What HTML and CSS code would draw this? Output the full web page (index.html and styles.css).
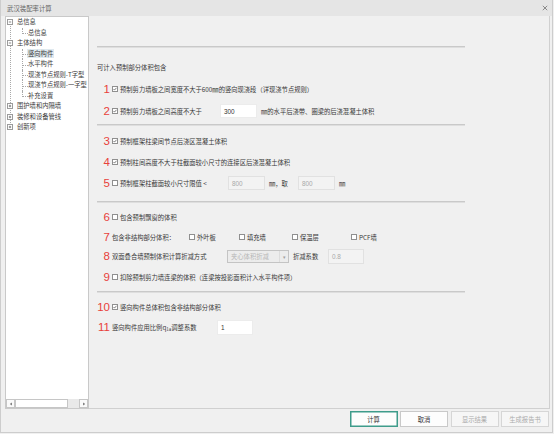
FILE: index.html
```html
<!DOCTYPE html>
<html lang="zh-CN">
<head>
<meta charset="utf-8">
<title>武汉装配率计算</title>
<link rel="stylesheet" href="styles.css">
</head>
<body>
<div class="window">
  <div class="titlebar">
    <span class="title">武汉装配率计算</span>
    <svg class="close" viewBox="0 0 6 6" width="6" height="6"><path d="M0.8 0.8L5.2 5.2M5.2 0.8L0.8 5.2"/></svg>
  </div>
  <div class="content">
    <div class="tree-panel">
      <ul class="tree">
        <li class="root"><span class="tw"><svg viewBox="0 0 4 4"><path d="M0.8 2H3.2"/></svg></span><span>总信息</span></li>
        <li class="child last"><span>总信息</span></li>
        <li class="root"><span class="tw"><svg viewBox="0 0 4 4"><path d="M0.8 2H3.2"/></svg></span><span>主体结构</span></li>
        <li class="child sel"><span class="lbl">竖向构件</span></li>
        <li class="child"><span>水平构件</span></li>
        <li class="child"><span>现浇节点规则-T字型</span></li>
        <li class="child"><span>现浇节点规则-一字型</span></li>
        <li class="child last"><span>补充设置</span></li>
        <li class="root"><span class="tw"><svg viewBox="0 0 4 4"><path d="M0.8 2H3.2M2 0.8V3.2"/></svg></span><span>围护墙和内隔墙</span></li>
        <li class="root"><span class="tw"><svg viewBox="0 0 4 4"><path d="M0.8 2H3.2M2 0.8V3.2"/></svg></span><span>装修和设备管线</span></li>
        <li class="root"><span class="tw"><svg viewBox="0 0 4 4"><path d="M0.8 2H3.2M2 0.8V3.2"/></svg></span><span>创新项</span></li>
      </ul>
      <div class="hscroll">
        <span class="sb-btn"><svg viewBox="0 0 4 4"><path d="M2.8 0.6V3.4L0.9 2Z"/></svg></span>
        <span class="sb-thumb"></span>
        <span class="sb-track"></span>
        <span class="sb-btn"><svg viewBox="0 0 4 4"><path d="M1.2 0.6V3.4L3.1 2Z"/></svg></span>
      </div>
    </div>

    <div class="main">
      <div class="sep"></div>

      <div class="row mt12"><span class="text">可计入预制部分体积包含</span></div>

      <div class="row mt8">
        <span class="num">1</span>
        <span class="cb"><svg viewBox="0 0 4 4"><path d="M0.5 2L1.5 3.1L3.5 0.8"/></svg></span>
        <span class="text">预制剪力墙板之间宽度不大于600㎜的竖向现浇段（详现浇节点规则）</span>
      </div>

      <div class="row mt8">
        <span class="num">2</span>
        <span class="cb"><svg viewBox="0 0 4 4"><path d="M0.5 2L1.5 3.1L3.5 0.8"/></svg></span>
        <span class="text w100">预制剪力墙板之间高度不大于</span>
        <span class="field">300</span>
        <span class="text ml4">㎜的水平后浇带、圈梁的后浇混凝土体积</span>
      </div>

      <div class="sep mt6"></div>

      <div class="row mt8">
        <span class="num">3</span>
        <span class="cb"><svg viewBox="0 0 4 4"><path d="M0.5 2L1.5 3.1L3.5 0.8"/></svg></span>
        <span class="text">预制框架柱梁间节点后浇区混凝土体积</span>
      </div>

      <div class="row mt7">
        <span class="num">4</span>
        <span class="cb"><svg viewBox="0 0 4 4"><path d="M0.5 2L1.5 3.1L3.5 0.8"/></svg></span>
        <span class="text">预制柱间高度不大于柱截面较小尺寸的连接区后浇混凝土体积</span>
      </div>

      <div class="row mt7">
        <span class="num">5</span>
        <span class="cb"></span>
        <span class="text w108">预制框架柱截面较小尺寸限值 &lt;</span>
        <span class="field off">800</span>
        <span class="text ml4 w29">㎜，取</span>
        <span class="field off">800</span>
        <span class="text ml4">㎜</span>
      </div>

      <div class="sep mt11"></div>

      <div class="row mt7">
        <span class="num">6</span>
        <span class="cb"></span>
        <span class="text">包含预制飘窗的体积</span>
      </div>

      <div class="row mt6">
        <span class="num">7</span>
        <span class="text w77">包含非结构部分体积：</span>
        <span class="opt w50"><span class="cb"></span><span class="text">外叶板</span></span>
        <span class="opt w53"><span class="cb"></span><span class="text">填充墙</span></span>
        <span class="opt w59"><span class="cb"></span><span class="text">保温层</span></span>
        <span class="opt"><span class="cb"></span><span class="text">PCF墙</span></span>
      </div>

      <div class="row mt5">
        <span class="num">8</span>
        <span class="text w115">双面叠合墙预制体积计算折减方式</span>
        <span class="select"><span class="sel-text">夹心体积折减</span><span class="sel-arrow">▾</span></span>
        <span class="text ml4 w35">折减系数</span>
        <span class="field off tall">0.8</span>
      </div>

      <div class="row mt7">
        <span class="num">9</span>
        <span class="cb"></span>
        <span class="text">扣除预制剪力墙连梁的体积（连梁按投影面积计入水平构件项）</span>
      </div>

      <div class="sep mt7"></div>

      <div class="row mt7">
        <span class="num">10</span>
        <span class="cb"><svg viewBox="0 0 4 4"><path d="M0.5 2L1.5 3.1L3.5 0.8"/></svg></span>
        <span class="text">竖向构件总体积包含非结构部分体积</span>
      </div>

      <div class="row mt6">
        <span class="num">11</span>
        <span class="text w105">竖向构件应用比例q<sub>1a</sub>调整系数</span>
        <span class="field tall">1</span>
      </div>
    </div>
  </div>

  <div class="footer">
    <span class="btn primary">计算</span>
    <span class="btn">取消</span>
    <span class="btn disabled">显示结果</span>
    <span class="btn disabled">生成报告书</span>
  </div>
</div>
</body>
</html>
```

FILE: styles.css
```css
* {
  box-sizing: border-box;
  margin: 0;
  padding: 0;
}

html, body {
  background: #f0f0f0;
}

body {
  font-family: "Noto Sans CJK SC", "Noto Sans", sans-serif;
  font-size: 6.3px;
  color: #383838;
}

.window {
  width: 553px;
  height: 433px;
  border: 1px solid #cdcdcd;
  border-top: 0;
  display: flex;
  flex-direction: column;
  background: #f0f0f0;
}

/* title bar */
.titlebar {
  height: 16px;
  flex: none;
  background: #e5e5e5;
  display: flex;
  align-items: center;
  justify-content: space-between;
  padding: 0 4px 0 6px;
}

.title {
  color: #666;
  font-size: 6.4px;
}

.close {
  width: 6px;
  height: 6px;
}

.close path {
  stroke: #8a8a8a;
  stroke-width: 1;
  fill: none;
}

/* content area */
.content {
  height: 393px;
  flex: none;
  display: flex;
  padding: 0 2px 0 4px;
}

/* tree */
.tree-panel {
  width: 84px;
  flex: none;
  border: 1px solid #c9c9c9;
  background: #fff;
  display: flex;
  flex-direction: column;
}

.tree {
  flex: 1;
  list-style: none;
  position: relative;
  color: #3c3c3c;
}

.tree::before {
  content: "";
  position: absolute;
  left: 4px;
  top: 5.25px;
  height: 105px;
  border-left: 1px dotted #a9a9a9;
}

.tree li {
  position: relative;
  height: 10.5px;
  line-height: 10.5px;
  display: flex;
  align-items: center;
  white-space: nowrap;
}

.root {
  padding-left: 1px;
}

.tw {
  position: relative;
  z-index: 1;
  width: 6px;
  height: 6px;
  border: 1px solid #9c9c9c;
  background: #fff;
  margin-right: 4px;
  display: flex;
}

.tw svg {
  width: 4px;
  height: 4px;
}

.tw path {
  stroke: #555;
  stroke-width: 0.7;
  fill: none;
}

.child {
  padding-left: 22px;
}

.child::before {
  content: "";
  position: absolute;
  left: 16px;
  top: 0;
  height: 5.5px;
  width: 5px;
  border-left: 1px dotted #a9a9a9;
  border-bottom: 1px dotted #a9a9a9;
}

.child:not(.last)::after {
  content: "";
  position: absolute;
  left: 16px;
  top: 5.5px;
  bottom: 0;
  border-left: 1px dotted #a9a9a9;
}

.child.sel {
  padding-left: 21px;
}

.child.sel .lbl {
  background: #dfe9ef;
  padding: 0 1px;
  line-height: 9px;
}

.hscroll {
  height: 9px;
  flex: none;
  display: flex;
  background: #e9e9e9;
}

.sb-btn {
  width: 9px;
  height: 9px;
  border: 1px solid #c6c6c6;
  background: #fafafa;
  display: flex;
  align-items: center;
  justify-content: center;
}

.sb-btn svg {
  width: 4px;
  height: 4px;
}

.sb-btn path {
  fill: #666;
}

.sb-thumb {
  width: 53px;
  height: 9px;
  border: 1px solid #c6c6c6;
  background: #fff;
}

.sb-track {
  flex: 1;
}

/* main form */
.main {
  flex: 1;
  border-right: 1px solid #d0d0d0;
  border-bottom: 1px solid #d0d0d0;
  padding: 30px 0 0 8px;
  display: flex;
  flex-direction: column;
}

.sep {
  width: 368px;
  height: 2px;
  flex: none;
  border-top: 1px solid #c9c9c9;
  border-bottom: 1px solid #dedede;
}

.row {
  height: 14px;
  flex: none;
  display: flex;
  align-items: center;
  white-space: nowrap;
}

.mt5 { margin-top: 5px; }
.mt6 { margin-top: 6px; }
.mt7 { margin-top: 7px; }
.mt8 { margin-top: 8px; }
.mt11 { margin-top: 11px; }
.mt12 { margin-top: 12px; }

.num {
  width: 13px;
  flex: none;
  margin-right: 2px;
  text-align: right;
  font-family: "Liberation Sans", Arial, sans-serif;
  font-size: 11.5px;
  line-height: 14px;
  color: #e8403a;
}

.cb {
  width: 6px;
  height: 6px;
  flex: none;
  border: 1px solid #8f8f8f;
  background: #fff;
  margin-right: 2px;
  display: flex;
}

.cb svg {
  width: 4px;
  height: 4px;
}

.cb path {
  stroke: #555;
  stroke-width: 0.75;
  fill: none;
}

.text {
  flex: none;
}

.text sub {
  font-size: 4.5px;
  vertical-align: -1px;
}

.w29 { width: 29px; }
.w35 { width: 35px; }
.w77 { width: 77px; }
.w100 { width: 100px; }
.w105 { width: 105px; }
.w108 { width: 108px; }
.w115 { width: 115px; }
.w50 { width: 50px; }
.w53 { width: 53px; }
.w59 { width: 59px; }
.ml4 { margin-left: 4px; }

.opt {
  display: flex;
  align-items: center;
  flex: none;
}

.field {
  width: 37px;
  height: 14px;
  flex: none;
  background: #fff;
  border: 1px solid #ececec;
  padding-left: 3px;
  display: flex;
  align-items: center;
  color: #333;
  font-family: "Liberation Sans", Arial, sans-serif;
  font-size: 6.4px;
}

.field.tall {
  width: 36px;
  height: 15px;
}

.field.off {
  background: #f3f3f3;
  border: 1px solid #e1e1e1;
  color: #a9a9a9;
}

.select {
  width: 62px;
  height: 13px;
  flex: none;
  border: 1px solid #c4c4c4;
  background: #ececec;
  display: flex;
  align-items: center;
}

.sel-text {
  flex: 1;
  padding-left: 3px;
  color: #b7b7b7;
}

.sel-arrow {
  width: 9px;
  height: 11px;
  border-left: 1px solid #dcdcdc;
  color: #a0a0a0;
  font-size: 5px;
  display: flex;
  align-items: center;
  justify-content: center;
}

/* footer */
.footer {
  flex: 1;
  display: flex;
  justify-content: flex-end;
  align-items: flex-start;
  gap: 2.5px;
  padding: 2px 3px 0 0;
}

.btn {
  width: 48px;
  height: 16px;
  border: 1px solid #c9c9c9;
  background: #fdfdfd;
  display: flex;
  align-items: center;
  justify-content: center;
  color: #333;
}

.btn.primary {
  border: 1px solid #3f9c8b;
  box-shadow: inset 0 0 0 0.5px #3f9c8b;
}

.btn.disabled {
  background: #f6f6f6;
  border-color: #d6d6d6;
  color: #ababab;
}
```
